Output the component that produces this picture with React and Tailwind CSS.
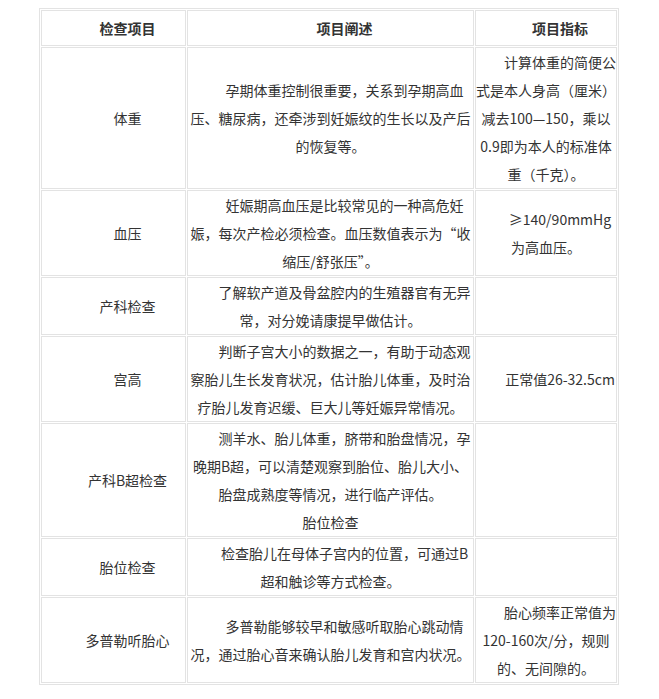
// Prenatal check table (产检项目表)

const rows = [
    {
        name: '体重',
        desc: [['孕期体重控制很重要，关系到孕期高血', '压、糖尿病，还牵涉到妊娠纹的生长以及产后', '的恢复等。']],
        index: ['计算体重的简便公', '式是本人身高（厘米）', '减去100—150，乘以', '0.9即为本人的标准体', '重（千克）。'],
    },
    {
        name: '血压',
        desc: [['妊娠期高血压是比较常见的一种高危妊', '娠，每次产检必须检查。血压数值表示为“收', '缩压/舒张压”。']],
        index: ['≥140/90mmHg', '为高血压。'],
    },
    {
        name: '产科检查',
        desc: [['了解软产道及骨盆腔内的生殖器官有无异', '常，对分娩请康提早做估计。']],
        index: null,
    },
    {
        name: '宫高',
        desc: [['判断子宫大小的数据之一，有助于动态观', '察胎儿生长发育状况，估计胎儿体重，及时治', '疗胎儿发育迟缓、巨大儿等妊娠异常情况。']],
        index: ['正常值26-32.5cm'],
    },
    {
        name: '产科B超检查',
        desc: [['测羊水、胎儿体重，脐带和胎盘情况，孕', '晚期B超，可以清楚观察到胎位、胎儿大小、', '胎盘成熟度等情况，进行临产评估。'], ['胎位检查']],
        index: null,
    },
    {
        name: '胎位检查',
        desc: [['检查胎儿在母体子宫内的位置，可通过B', '超和触诊等方式检查。']],
        index: null,
    },
    {
        name: '多普勒听胎心',
        desc: [['多普勒能够较早和敏感听取胎心跳动情', '况，通过胎心音来确认胎儿发育和宫内状况。']],
        index: ['胎心频率正常值为', '120-160次/分，规则', '的、无间隙的。'],
    },
];

function Lines({ lines, indent = true }) {
    return (
        <p className={`${indent ? 'indent-[2em]' : ''} text-center leading-[28px] whitespace-nowrap`}>
            {lines.map((l, i) => (
                <span key={i}>
                    {i > 0 && <br />}
                    {l}
                </span>
            ))}
        </p>
    );
}

export default function App() {
    const cell = 'border border-[#e3e3e3] p-0 align-middle';

    return (
        <div
            className="w-[659px] h-[699px] bg-white pt-[8px] pl-[39px] text-[14px] text-[#333]"
            style={{ fontFamily: '"Noto Sans CJK SC", "Liberation Sans", sans-serif' }}
        >
            <table className="w-[580px] table-fixed border-separate border-spacing-[1px] border border-[#e3e3e3]">
                <thead>
                    <tr className="h-[36px]">
                        <th className={`${cell} w-[145px] font-bold`}>
                            <Lines lines={['检查项目']} />
                        </th>
                        <th className={`${cell} w-[287px] font-bold`}>
                            <Lines lines={['项目阐述']} />
                        </th>
                        <th className={`${cell} w-[142px] font-bold`}>
                            <Lines lines={['项目指标']} />
                        </th>
                    </tr>
                </thead>
                <tbody>
                    {rows.map((r) => (
                        <tr key={r.name}>
                            <td className={cell}>
                                <Lines lines={[r.name]} />
                            </td>
                            <td className={cell}>
                                {r.desc.map((d, i) => (
                                    <Lines key={i} lines={d} indent={i === 0} />
                                ))}
                            </td>
                            <td className={cell}>
                                {r.index && <Lines lines={r.index} />}
                            </td>
                        </tr>
                    ))}
                </tbody>
            </table>
        </div>
    );
}
